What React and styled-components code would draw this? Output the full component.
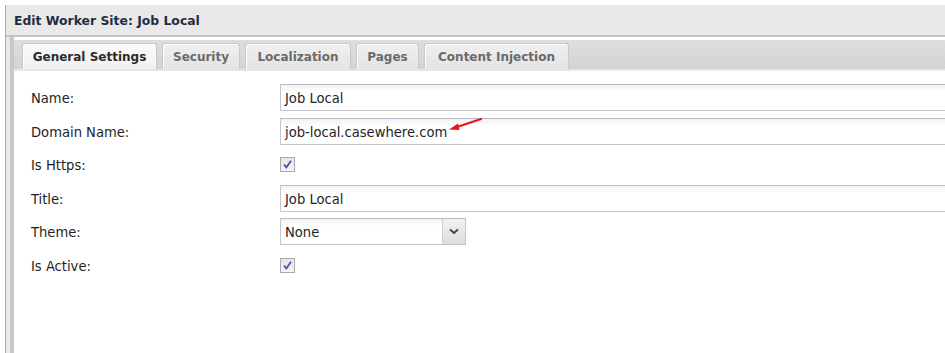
import React from "react";
import styled, { createGlobalStyle } from "styled-components";

const Global = createGlobalStyle`
  html, body { margin: 0; padding: 0; background: #fff; overflow: hidden; }
  body { font-family: "DejaVu Sans Condensed", "DejaVu Sans", sans-serif; }
`;

const Page = styled.div`
  width: 945px;
  height: 353px;
  padding: 5px 0 0 5px;
  box-sizing: border-box;
  overflow: hidden;
`;

const Window = styled.div`
  width: 960px;
  height: 360px;
  background: #e9e9e9;
  border-left: 1px solid #a9a9a9;
  display: flex;
  flex-direction: column;
`;

const Header = styled.div`
  height: 32px;
  flex: none;
  display: flex;
  align-items: center;
  padding-left: 8px;
  font-family: "DejaVu Sans", sans-serif;
  font-weight: bold;
  font-size: 12.4px;
  color: #1f2d44;
  border-bottom: 2px solid #c3c1c3;
  box-sizing: border-box;
`;

const Panel = styled.div`
  flex: 1;
  margin-left: 4px;
  border-left: 4px solid #cbc6cb;
  background: #fff;
  display: flex;
  flex-direction: column;
`;

const TabStrip = styled.div`
  height: 31px;
  margin-top: 3px;
  flex: none;
  background: linear-gradient(#dedede, #d3d3d3);
  border-bottom: 2px solid #e6e6e6;
  box-sizing: border-box;
  display: flex;
  align-items: flex-end;
  gap: 5px;
  padding-left: 8px;
`;

const Tab = styled.div`
  width: ${(p) => p.$w}px;
  height: 26px;
  box-sizing: border-box;
  display: flex;
  align-items: center;
  justify-content: center;
  font-family: "DejaVu Sans", sans-serif;
  font-size: 12px;
  font-weight: bold;
  color: ${(p) => (p.$active ? "#2b2b2b" : "#6a6a6a")};
  border: 1px solid #c9c9c9;
  border-bottom: none;
  border-radius: 3px 3px 0 0;
  background: ${(p) =>
    p.$active
      ? "linear-gradient(#fafafa, #f1f1f1)"
      : "linear-gradient(#efefef, #e4e4e4)"};
  box-shadow: inset 1px 1px 0 #fdfdfd;
`;

const Form = styled.div`
  padding: 13px 0 0 17px;
  display: grid;
  grid-template-columns: 249px 1fr;
  grid-auto-rows: 27px;
  row-gap: 6.6px;
  align-items: center;
`;

const Label = styled.div`
  font-size: 14.6px;
  color: #1e1e26;
`;

const Field = styled.div`
  height: 27px;
  box-sizing: border-box;
  border: 1px solid #c6c6d3;
  border-top-color: #b9b9c9;
  background: linear-gradient(#f2f2f2, #fff 7px);
  display: flex;
  align-items: center;
  padding-left: 4px;
  font-size: 14.6px;
  color: #1e1e26;
  position: relative;
`;

const Select = styled(Field)`
  width: 186px;
  padding-right: 0;
  justify-content: space-between;
`;

const DropButton = styled.div`
  width: 22px;
  height: 100%;
  border-left: 1px solid #cfcfd8;
  background: linear-gradient(#f2f2f2, #dcdcdc);
  display: flex;
  align-items: center;
  justify-content: center;
`;

const Check = styled.div`
  width: 15px;
  height: 15px;
  box-sizing: border-box;
  border: 1px solid #a9a9a9;
  background: linear-gradient(#e6e6e6, #f4f4f4);
  display: flex;
  align-items: center;
  justify-content: center;
`;

const Arrow = styled.svg`
  position: absolute;
  left: 167px;
  top: -2px;
`;

const tabs = [
  { t: "General Settings", w: 135, active: true },
  { t: "Security", w: 78 },
  { t: "Localization", w: 106 },
  { t: "Pages", w: 63 },
  { t: "Content Injection", w: 145 },
];

const CheckBox = () => (
  <Check>
    <svg width="11" height="11" viewBox="0 0 11 11">
      <path d="M2 5.5 L4.3 8.5 L9 1.8" fill="none" stroke="#4457a6" strokeWidth="1.8" />
    </svg>
  </Check>
);

export default function App() {
  return (
    <Page>
      <Global />
      <Window>
        <Header>Edit Worker Site: Job Local</Header>
        <Panel>
          <TabStrip>
            {tabs.map((x) => (
              <Tab key={x.t} $active={x.active} $w={x.w}>
                {x.t}
              </Tab>
            ))}
          </TabStrip>
          <Form>
            <Label>Name:</Label>
            <Field>Job Local</Field>
            <Label>Domain Name:</Label>
            <Field>
              job-local.casewhere.com
              <Arrow width="36" height="16" viewBox="0 0 36 16">
                <path d="M6 11 L33 2" stroke="#e8141a" strokeWidth="2.2" strokeLinecap="round" />
                <path d="M1 12.5 L10 6.5 L11.5 13 Z" fill="#e8141a" />
              </Arrow>
            </Field>
            <Label>Is Https:</Label>
            <div><CheckBox /></div>
            <Label>Title:</Label>
            <Field>Job Local</Field>
            <Label>Theme:</Label>
            <div>
              <Select>
                None
                <DropButton>
                  <svg width="10" height="7" viewBox="0 0 10 7">
                    <path d="M1 1.5 L5 5 L9 1.5" fill="none" stroke="#444" strokeWidth="2" />
                  </svg>
                </DropButton>
              </Select>
            </div>
            <Label>Is Active:</Label>
            <div><CheckBox /></div>
          </Form>
        </Panel>
      </Window>
    </Page>
  );
}
